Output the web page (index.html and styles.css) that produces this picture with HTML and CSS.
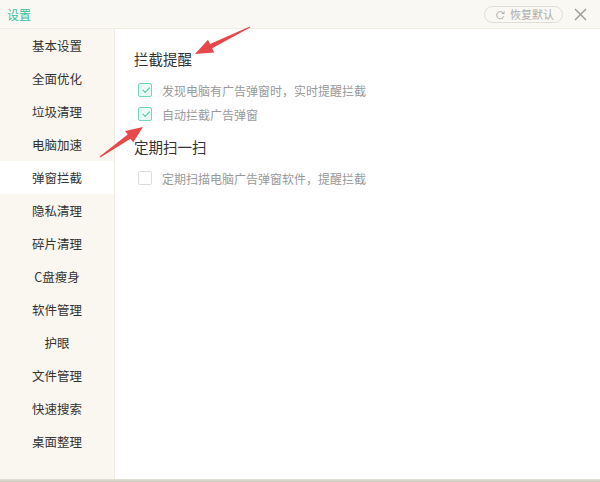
FILE: index.html
```html
<!DOCTYPE html>
<html lang="zh-CN">
<head>
  <meta charset="UTF-8" />
  <meta name="viewport" content="width=device-width, initial-scale=1.0" />
  <title>设置</title>
  <link rel="stylesheet" href="styles.css">
</head>
<body>
  <div class="window">
    <header class="titlebar">
      <span class="title">设置</span>
      <div class="actions">
        <button class="restore">
          <svg width="11" height="11" viewBox="0 0 11 11"><path d="M8.5 4.5 A3.6 3.6 0 1 0 8.8 7.2" fill="none" stroke="#aaa" stroke-width="1"/><path d="M6.8 4.6 H9.1 V2.3" fill="none" stroke="#aaa" stroke-width="1"/></svg>
          恢复默认
        </button>
        <span class="close">
          <svg width="13" height="13" viewBox="0 0 13 13"><path d="M1 1 L12 12 M12 1 L1 12" stroke="#999" stroke-width="1.4"/></svg>
        </span>
      </div>
    </header>

    <div class="main">
      <nav class="sidebar">
        <div class="nav-item">基本设置</div>
        <div class="nav-item">全面优化</div>
        <div class="nav-item">垃圾清理</div>
        <div class="nav-item">电脑加速</div>
        <div class="nav-item active">弹窗拦截</div>
        <div class="nav-item">隐私清理</div>
        <div class="nav-item">碎片清理</div>
        <div class="nav-item">C盘瘦身</div>
        <div class="nav-item">软件管理</div>
        <div class="nav-item">护眼</div>
        <div class="nav-item">文件管理</div>
        <div class="nav-item">快速搜索</div>
        <div class="nav-item">桌面整理</div>
      </nav>

      <section class="content">
        <h2>拦截提醒</h2>
        <label class="option"><span class="box checked"></span>发现电脑有广告弹窗时，实时提醒拦截</label>
        <label class="option"><span class="box checked"></span>自动拦截广告弹窗</label>
        <h2>定期扫一扫</h2>
        <label class="option"><span class="box"></span>定期扫描电脑广告弹窗软件，提醒拦截</label>
      </section>
    </div>
    <div class="bottom"></div>

    <!-- annotation arrows -->
    <svg class="marks" width="600" height="482" viewBox="0 0 600 482">
      <path d="M195 54 L214.2 52.4 L212.2 48.3 L250.2 27.4 L249.8 26.6 L210 43.9 L208 39.8 Z" fill="#e8484a"/>
      <path d="M143 127 L133.1 142.4 L130.5 138.8 L100.3 157.4 L99.7 156.6 L127.7 134.6 L125.1 131 Z" fill="#e8484a"/>
    </svg>
  </div>
</body>
</html>
```

FILE: styles.css
```css
body {
  margin: 0;
  padding: 0;
  font-family: "Noto Sans CJK SC", "Microsoft YaHei", sans-serif;
  background-color: #fff;
}
.window {
  position: relative;
  width: 600px;
  height: 482px;
  overflow: hidden;
}
.titlebar {
  height: 28px;
  background-color: #faf8f2;
  border-bottom: 1px solid #efece4;
  display: flex;
  align-items: center;
  justify-content: space-between;
  padding: 0 13px 0 7px;
}
.title {
  font-size: 12px;
  color: #35c09e;
}
.actions {
  display: flex;
  align-items: center;
  gap: 11px;
}
.restore {
  height: 17px;
  padding: 0 8px 0 10px;
  border: 1px solid #e0ddd6;
  border-radius: 9px;
  background: #faf8f2;
  font-family: inherit;
  font-size: 11px;
  color: #aaa;
  display: flex;
  align-items: center;
  gap: 4px;
  line-height: 1;
}
.close {
  display: flex;
}
.main {
  display: flex;
  height: 450px;
}
.sidebar {
  width: 114px;
  background-color: #faf7f0;
  border-right: 1px solid #efece5;
}
.nav-item {
  height: 33px;
  line-height: 33px;
  text-align: center;
  font-size: 12.5px;
  color: #333;
}
.nav-item.active {
  background-color: #fff;
}
.content {
  flex: 1;
  padding: 18px 0 0 19px;
}
.content h2 {
  margin: 0 0 7px;
  font-size: 14.5px;
  font-weight: normal;
  color: #333;
  height: 24px;
  line-height: 24px;
}
.content .option + h2 {
  margin-top: 9px;
  margin-bottom: 7px;
}
.option {
  display: flex;
  align-items: center;
  height: 24px;
  font-size: 12px;
  color: #999;
  padding-left: 4px;
}
.box {
  width: 12px;
  height: 12px;
  border: 1.5px solid #dcdcdc;
  border-radius: 2px;
  margin-right: 10px;
  position: relative;
  background: #fff;
}
.box.checked {
  border-color: #72d6bf;
  background: #eafaf5;
}
.box.checked::after {
  content: "";
  position: absolute;
  left: 3px;
  top: 1px;
  width: 6px;
  height: 3px;
  border-left: 1.5px solid #4cc9a9;
  border-bottom: 1.5px solid #4cc9a9;
  transform: rotate(-45deg) translate(-1px, 2px);
}
.bottom {
  height: 3px;
  background: linear-gradient(#e6e2d6, #c9c6bb);
}
.marks {
  position: absolute;
  left: 0;
  top: 0;
  pointer-events: none;
}
```
